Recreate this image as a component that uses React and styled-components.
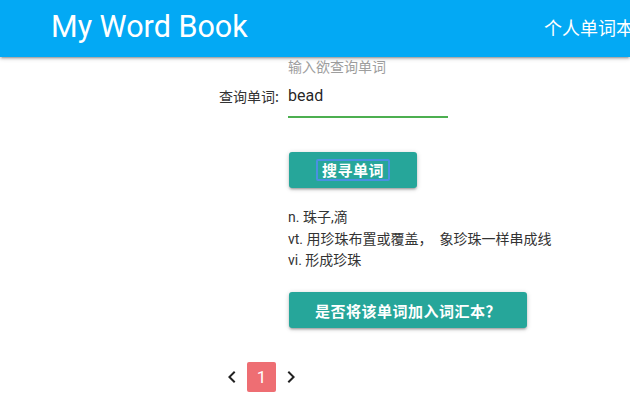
import React from "react";
import styled, { createGlobalStyle } from "styled-components";

const Global = createGlobalStyle`
  html, body { margin: 0; padding: 0; overflow: hidden; background: #fff; }
  body { font-family: Roboto, "Noto Sans CJK SC", sans-serif; color: rgba(0,0,0,0.87); }
  * { box-sizing: border-box; }
`;

const Header = styled.header`
  height: 57px;
  background: #03a9f4;
  display: flex;
  align-items: center;
  padding: 0 0 4px 51px;
  overflow: hidden;
  box-shadow: 0 2px 2px 0 rgba(0,0,0,0.14), 0 3px 1px -2px rgba(0,0,0,0.12), 0 1px 5px 0 rgba(0,0,0,0.2);
  position: relative;
  z-index: 1;
`;

const Brand = styled.div`
  font-family: Roboto, sans-serif;
  font-size: 30.5px;
  color: #fff;
  white-space: nowrap;
`;

const NavLink = styled.div`
  margin-left: auto;
  margin-right: -4px;
  font-family: "Noto Sans CJK SC", sans-serif;
  font-size: 18px;
  color: #fff;
  white-space: nowrap;
  flex-shrink: 0;
`;

const Main = styled.main`
  padding-top: 1px;
`;

const SearchGrid = styled.div`
  display: grid;
  grid-template-columns: 288px 160px;
  grid-template-rows: 16px 44px;
`;

const FloatLabel = styled.div`
  grid-column: 2;
  grid-row: 1;
  font-family: "Noto Sans CJK SC", sans-serif;
  font-size: 14px;
  line-height: 16px;
  color: #9e9e9e;
  white-space: nowrap;
`;

const FieldLabel = styled.label`
  grid-column: 1;
  grid-row: 2;
  align-self: center;
  justify-self: end;
  padding-right: 9px;
  font-family: "Noto Sans CJK SC", sans-serif;
  font-size: 14px;
  color: #333;
  white-space: nowrap;
`;

const Input = styled.input`
  grid-column: 2;
  grid-row: 2;
  width: 160px;
  height: 44px;
  border: none;
  border-bottom: 2px solid #4caf50;
  outline: none;
  padding: 0;
  margin: 0;
  font-family: Roboto, sans-serif;
  font-size: 16px;
  color: rgba(0,0,0,0.87);
  background: transparent;
`;

const Body = styled.section`
  padding-left: 288px;
  display: flex;
  flex-direction: column;
  align-items: flex-start;
`;

const Button = styled.button`
  margin: ${(p) => p.$top}px 0 0 1px;
  width: ${(p) => p.$width}px;
  height: 36px;
  border: none;
  border-radius: 3px;
  background: #26a69a;
  color: #fff;
  font-family: "Noto Sans CJK SC", sans-serif;
  font-size: 15px;
  font-weight: 700;
  letter-spacing: 0.5px;
  display: flex;
  align-items: center;
  justify-content: center;
  padding: 0;
  box-shadow: 0 2px 2px 0 rgba(0,0,0,0.14), 0 3px 1px -2px rgba(0,0,0,0.12), 0 1px 5px 0 rgba(0,0,0,0.2);
  cursor: pointer;
`;

const FocusText = styled.span`
  border: 2px solid #4a90e2;
  border-radius: 2px;
  padding: 0 4px;
  line-height: 18px;
`;

const Defs = styled.div`
  margin-top: 19px;
  font-family: Roboto, "Noto Sans CJK SC", sans-serif;
  font-size: 14px;
  line-height: 21.5px;
  color: #333;
`;

const DefLine = styled.div`
  white-space: pre;
`;

const Pagination = styled.nav`
  margin: 34px 0 0 220px;
  display: flex;
  align-items: center;
  gap: 3px;
  height: 30px;
`;

const Chevron = styled.svg`
  width: 24px;
  height: 24px;
  fill: rgba(0,0,0,0.87);
`;

const Page = styled.div`
  width: 29px;
  height: 30px;
  border-radius: 2px;
  background: ${(p) => (p.$active ? "#ee6e73" : "transparent")};
  color: #fff;
  font-family: Roboto, sans-serif;
  font-size: 17px;
  display: flex;
  align-items: center;
  justify-content: center;
`;

export default function App() {
  return (
    <>
      <Global />
      <Header>
        <Brand>My Word Book</Brand>
        <NavLink>个人单词本</NavLink>
      </Header>
      <Main>
        <SearchGrid>
          <FloatLabel>输入欲查询单词</FloatLabel>
          <FieldLabel>查询单词:</FieldLabel>
          <Input defaultValue="bead" />
        </SearchGrid>
        <Body>
          <Button $top={34} $width={128}>
            <FocusText>搜寻单词</FocusText>
          </Button>
          <Defs>
            <DefLine>n. 珠子,滴</DefLine>
            <DefLine>vt. 用珍珠布置或覆盖，  象珍珠一样串成线</DefLine>
            <DefLine>vi. 形成珍珠</DefLine>
          </Defs>
          <Button $top={20.5} $width={238}>是否将该单词加入词汇本？</Button>
        </Body>
        <Pagination>
          <Chevron viewBox="0 0 24 24">
            <path d="M15.41 7.41L14 6l-6 6 6 6 1.41-1.41L10.83 12z" />
          </Chevron>
          <Page $active>1</Page>
          <Chevron viewBox="0 0 24 24">
            <path d="M10 6L8.59 7.41 13.17 12l-4.58 4.59L10 18l6-6z" />
          </Chevron>
        </Pagination>
      </Main>
    </>
  );
}
